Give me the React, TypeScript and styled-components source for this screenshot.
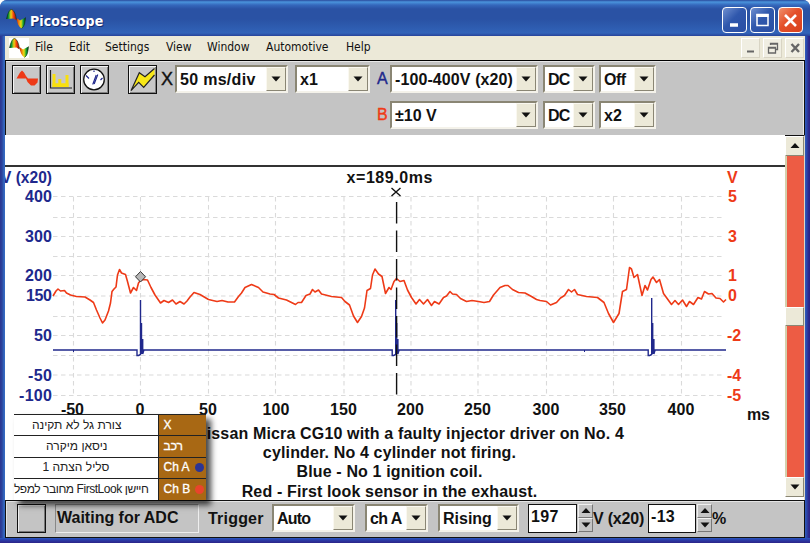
import React from 'react';
import styled, { createGlobalStyle } from 'styled-components';

const GlobalStyle = createGlobalStyle`
  * { box-sizing: border-box; }
  html, body { margin: 0; padding: 0; background: #fff; overflow: hidden; }
`;

const UI_FONT = `"Liberation Sans", Arial, sans-serif`;
const MENU_FONT = `"DejaVu Sans Condensed", "DejaVu Sans", sans-serif`;
const BLUE = '#20288c';
const RED = '#ee3a17';

const Window = styled.div`
  position: relative;
  width: 810px;
  height: 543px;
  display: flex;
  flex-direction: column;
  padding: 0 5px 5px;
  overflow: hidden;
  border-radius: 7px 7px 0 0;
  background:
    linear-gradient(0deg, #2c2488 0, #2a3ca8 3px, #2858c0 5px, transparent 5px),
    linear-gradient(90deg, #2c3490 0, #2c449c 2px, #3468c0 4px, #3468c0 804px, #2c50b4 806px, #2c2488 809px);
  font: 700 16px ${UI_FONT};
  color: #111;
`;

const TitleBar = styled.header`
  height: 36px;
  margin: 0 -5px;
  padding: 5px 7px 0 6px;
  display: flex;
  align-items: flex-start;
  background: linear-gradient(180deg, #2a4a9c 0, #4a94dc 2px, #3568bc 5px, #2a52a4 9px, #2a52a4 19px, #2f5eb2 29px, #3263b8 33px, #27439a 36px);
`;

const Title = styled.h1`
  margin: 6px auto 0 4px;
  font: 700 14px/20px ${MENU_FONT};
  letter-spacing: 0.1px;
  color: #fff;
  text-shadow: 1px 1px 0 #14286c;
`;

const CaptionButtons = styled.div`
  display: flex;
  gap: 3px;
  margin-top: 2px;
`;

const CaptionButton = styled.button<{ $close?: boolean }>`
  width: 25px;
  height: 26px;
  padding: 0;
  display: grid;
  place-items: center;
  border: 1px solid #fff;
  border-radius: 4px;
  background: ${p => p.$close
    ? 'linear-gradient(135deg, #f0906c, #e4502a 45%, #d8401c)'
    : 'linear-gradient(135deg, #7090d0, #2f57ac 45%, #2a4ea4)'};
`;

const MenuBar = styled.nav`
  height: 24px;
  flex: none;
  display: flex;
  align-items: center;
  padding-left: 4px;
  background: #ece9d8;
  font: 400 12px/20px ${MENU_FONT};
  color: #111;
`;

const MenuItems = styled.div`
  display: flex;
  gap: 15px;
  margin-left: 6px;
`;

const MenuItem = styled.span<{ $w: number }>`
  width: ${p => p.$w}px;
  white-space: nowrap;
  padding-bottom: 2px;
`;

const MdiButtons = styled.div`
  display: flex;
  gap: 3px;
  margin-left: auto;
  margin-right: 1px;
`;

const MdiButton = styled.button`
  width: 19px;
  height: 20px;
  padding: 0;
  display: grid;
  place-items: center;
  border: 1px solid;
  border-color: #fff #d8d4c4 #d8d4c4 #fff;
  background: #f0eee2;
`;

const Toolbar = styled.section`
  height: 75px;
  flex: none;
  display: flex;
  align-items: flex-start;
  padding: 4px 0 0 6px;
  border-top: 1px solid #000;
  border-left: 1px solid #111;
  border-right: 1px solid #111;
  background: #c4c4c4;
  box-shadow: inset -1px 1px #e8e8e8;
`;

const ToolButton = styled.button<{ $gap?: number }>`
  width: 29px;
  height: 29px;
  padding: 0;
  flex: none;
  margin-right: ${p => p.$gap ?? 5}px;
  display: block;
  border: 1px solid #111;
  background: #c8c8c8;
  box-shadow: inset 1px 1px #f4f4f4, inset -1px -1px #808080;
`;

const AxisCaption = styled.span<{ $c?: string }>`
  width: 12px;
  line-height: 28px;
  font-weight: 400;
  font-size: 16px;
  -webkit-text-stroke: 0.4px currentColor;
  color: ${p => p.$c ?? '#111'};
`;

const CaptionX = styled(AxisCaption)`
  width: 14px;
  margin-left: 4px;
  font-size: 18px;
`;

const ChannelGrid = styled.div`
  display: grid;
  grid-template-columns: 13px 148px 52px 57px;
  row-gap: 8px;
  margin-left: 7px;
  & > :nth-child(4n + 3) { margin-left: 5px; width: 52px; }
  & > :nth-child(4n) { margin-left: 9px; width: 57px; }
`;

const ComboBox = styled.div<{ $w: number; $gap?: number }>`
  width: ${p => p.$w}px;
  height: 28px;
  flex: none;
  margin-right: ${p => p.$gap ?? 0}px;
  display: flex;
  justify-content: space-between;
  align-items: stretch;
  border: 2px solid;
  border-color: #8a8674 #f4f2ea #f4f2ea #8a8674;
  background: #fff;
  overflow: hidden;
`;

const ComboText = styled.span<{ $ls?: number }>`
  padding-left: 3px;
  line-height: 25px;
  white-space: nowrap;
  letter-spacing: ${p => p.$ls ?? 0}px;
  width: 0;
`;

const ComboArrow = styled.span`
  width: 20px;
  display: grid;
  place-items: center;
  background: #ece9d8;
  border: 1px solid;
  border-color: #faf8f0 #8a8674 #8a8674 #faf8f0;
`;

const Body = styled.main`
  flex: 1;
  min-height: 0;
  display: flex;
  background: #fff;
`;

const Plot = styled.div`
  flex: 1;
  display: flex;
  flex-direction: column;
`;

const NoteStrip = styled.div`
  height: 32px;
  border-bottom: 2px solid #333;
  flex: none;
`;

const Chart = styled.svg`
  display: block;
  flex: none;
  width: 780px;
  height: 255px;
`;

const Notes = styled.div`
  display: flex;
  flex-direction: column;
  align-items: center;
  width: 769px;
  padding-top: 2px;
`;

const NoteLine = styled.p<{ $shift?: number }>`
  margin: 0 0 0 ${p => p.$shift ?? 0}px;
  line-height: 19.2px;
  letter-spacing: 0.15px;
  white-space: nowrap;
`;

const Scroll = styled.div`
  width: 20px;
  display: flex;
  flex-direction: column;
  border-top: 1px solid #111;
  border-right: 1px solid #dcd8c8;
  padding-bottom: 3px;
  background: #fff;
`;

const ScrollButton = styled.div`
  height: 20px;
  display: grid;
  place-items: center;
  background: #ece9d8;
  border: 1px solid;
  border-color: #fff #8a8674 #8a8674 #fff;
`;

const Track = styled.div<{ $h: number }>`
  height: ${p => p.$h}px;
  background: #ed5c44;
  border-left: 2px solid #d4d0ac;
`;

const StatusBar = styled.footer`
  height: 38px;
  flex: none;
  display: flex;
  align-items: flex-start;
  padding: 3px 0 0 11px;
  border: 1px solid #111;
  background: #c4c4c4;
  box-shadow: inset 1px 1px #e4e4e4;
`;

const Indicator = styled.div`
  width: 29px;
  height: 29px;
  border: 1px solid #111;
  box-shadow: inset 1px 1px #eee, inset -1px -1px #777;
`;

const StatusPanel = styled.div`
  width: 144px;
  height: 29px;
  margin-left: 9px;
  padding-left: 1px;
  line-height: 26px;
  white-space: nowrap;
  border: 1px solid;
  border-color: #888 #eee #eee #888;
`;

const StatusText = styled.span<{ $w: number; $ls?: number }>`
  width: ${p => p.$w}px;
  line-height: 28px;
  white-space: nowrap;
  letter-spacing: ${p => p.$ls ?? 0}px;
  margin-top: 1px;
`;

const TriggerLabel = styled(StatusText)`
  padding-left: 9px;
`;

const NumberBox = styled.div<{ $w: number }>`
  width: ${p => p.$w}px;
  height: 29px;
  padding-left: 2px;
  line-height: 23px;
  letter-spacing: 0.3px;
  border: 1px solid #111;
  background: #fff;
`;

const Spinner = styled.div`
  width: 15px;
  margin-left: 1px;
  display: grid;
  grid-template-rows: 14px 14px;
`;

const SpinButton = styled.span`
  display: grid;
  place-items: center;
  border: 1px solid;
  border-color: #f0f0f0 #777 #777 #f0f0f0;
`;

const Legend = styled.table`
  position: absolute;
  left: 14px;
  top: 414px;
  width: 192px;
  height: 86px;
  border-collapse: collapse;
  table-layout: fixed;
  background: #fff;
  box-shadow: 5px 5px 6px rgba(0, 0, 0, 0.72);
  font: 400 12px/19px "Liberation Sans", sans-serif;
`;

const LegendText = styled.td<{ $inset: number; $ls?: number }>`
  width: 144px;
  height: 21px;
  padding: 0 ${p => p.$inset}px 0 0;
  text-align: right;
  white-space: nowrap;
  letter-spacing: ${p => p.$ls ?? 0}px;
  border-top: 1px solid #222;
  color: #222;
`;

const LegendKey = styled.td`
  height: 21px;
  padding: 0 0 0 5px;
  border-top: 1px solid #222;
  border-left: 1px solid #222;
  background: #a86814;
  color: #fff;
  -webkit-text-stroke: 0.3px #fff;
`;

const KeyRow = styled.div`
  display: flex;
  align-items: center;
  justify-content: space-between;
  padding-right: 2px;
  white-space: nowrap;
`;

const Dot = styled.i<{ $c: string }>`
  width: 9px;
  height: 9px;
  flex: none;
  border-radius: 50%;
  background: ${p => p.$c};
`;

const SvgTriangle = styled.svg`
  display: block;
`;

const Triangle = ({ up }: { up?: boolean }) => (
  <SvgTriangle width="10" height="6" viewBox="0 0 10 6">
    <path d={up ? 'M5 0 L9.5 5 H.5Z' : 'M.5 .5 H9.5 L5 5.5Z'} fill="#111" />
  </SvgTriangle>
);

const Combo = ({ w, gap, text, ls }: { w: number; gap?: number; text: string; ls?: number }) => (
  <ComboBox $w={w} $gap={gap}>
    <ComboText $ls={ls}>{text}</ComboText>
    <ComboArrow><Triangle /></ComboArrow>
  </ComboBox>
);

const LogoSvg = styled.svg<{ $drop?: number }>`
  flex: none;
  margin-top: ${p => p.$drop ?? 0}px;
`;

const Logo = ({ id, light }: { id: string; light?: boolean }) => (
  <LogoSvg width="20" height="22" viewBox="0 0 20 22" $drop={light ? 0 : 3}>
    <defs>
      <linearGradient id={id} x1="0" x2="1" y1="0" y2="0">
        <stop offset="0" stopColor="#083c20" />
        <stop offset=".2" stopColor="#109838" />
        <stop offset=".45" stopColor="#f0d010" />
        <stop offset=".7" stopColor="#f04010" />
        <stop offset="1" stopColor="#801008" />
      </linearGradient>
      <linearGradient id={`${id}-r`} x1="0" x2="1" y1="0" y2="0">
        <stop offset="0" stopColor="#c02008" />
        <stop offset=".25" stopColor="#f08010" />
        <stop offset=".5" stopColor="#e8e010" />
        <stop offset=".75" stopColor="#10a038" />
        <stop offset="1" stopColor="#043010" />
      </linearGradient>
    </defs>
    {light && <rect width="20" height="20" y="1" fill="#fff" />}
    <path d="M.5 11 C2 5 3 2 5.5 1.5 C8.5 2.5 9.8 7 10.5 12.5 L7.5 10.5Z" fill={`url(#${id})`} />
    <path d="M10.5 10 L14 12.5 L19.5 9.5 C19 15 18.5 18.5 15.5 20.5 C12.5 18.5 11 15 10.5 10Z" fill={`url(#${id}-r)`} />
    <path d="M.5 11 C2 5 3 2 5.5 1.5 C8.5 2.5 9.7 7 10.5 11.5 M19.5 9.5 C19 15 18.5 18.5 15.5 20.5" fill="none" stroke="#10340c" strokeWidth=".6" />
  </LogoSvg>
);

const pressureTrace = `53,296 56,291 58,289 60.5,291 64.5,290.5 66.5,293 70.5,295 76.5,296.5 85,297 90,300 93.5,302.5 96.5,310 100,318 102.5,323 105,320 108.5,311 110.5,303 112,291.5 114,289 116,287 117.5,275 119.5,269.5 121.5,273 125.5,274.5 127.5,281.5 130.5,293 133.5,287.5 136.5,290.5 138.5,283 140.5,280.5 143.5,279.5 147.5,280 151,287.5 155,295 160.5,303 164,300.5 168.5,302.5 172.5,300 176,304 180,301.5 184,304 187,301 190,297 194,292.5 200,294.5 208.5,299.5 217,301.5 222,300.5 228,302 234.5,302 238.5,296.5 241.5,293 245,287.5 251.5,284.5 258.5,287.5 263,292 270,294 274,294.5 278.5,298 286.5,300 295.5,304.5 298,302.5 301.5,302.5 306,295.5 310,294 312.5,289.5 315,292 318.5,290 321.5,294 331.5,296.5 341.5,297.5 345,301.5 349.5,305 353.5,316 357.5,322.5 361.5,316.5 364.5,308 367,290.5 370.5,288.5 372.5,275 375,269 378.5,274 382,276.5 385.5,293.5 389,287.5 391,289.5 394,281.5 396.5,278.5 400,281.5 404,280.5 407.5,290 411.5,297.5 416,304 419.5,299.5 423.5,304 427.5,299.5 431.5,305.5 434.5,301.5 439,304 443.5,297.5 446.5,296 450,291.5 452.5,294 456.5,294.5 460.5,298.5 466.5,301.5 472,300.5 478.5,301.5 484,302.5 489.5,301.5 493.5,295 500,287.5 505,285.5 508,285.5 512.5,289.5 518.5,292.5 525,293 531.5,296.5 536.5,299.5 540,300.5 546.5,301.5 550.5,305 556.5,302.5 560.5,298 564.5,295.5 568.5,289.5 571.5,292 574.5,289.5 577.5,294.5 586.5,296.5 597.5,297.5 604,302.5 608.5,313.5 613.5,322.5 619,313.5 622.5,291.5 626.5,289.5 629.5,267.5 631.5,269 634,277.5 637.5,274.5 642,295.5 645,285.5 647.5,290 651,279.5 653,277 656.5,282.5 659.5,279.5 663.5,293.5 671.5,304.5 675,300.5 678.5,304.5 682.5,300 686.5,306.5 689.5,301.5 693.5,304.5 698,297.5 701.5,299 704.5,291.5 708.5,294 712,293.5 716,298 720,298.5 723.5,302 726,299.5`;

const pulse = (x: number, top: number) =>
  `H${x - 3.5} V355.5 H${x - 2} L${x} 354.5 V${top} V354 L${x + 1} 323 V354 L${x + 2.2} 339 V354 L${x + 3.4} 350 `;
const ignitionTrace = `M53 350 ${pulse(140.5, 300)}${pulse(395.7, 300)}${pulse(651.7, 298)}H726`;

const gridX = [73.5, 140.5, 208.5, 275.5, 344, 411, 478, 546.5, 613.5, 681.5];
const gridY = [196.5, 217.5, 236.5, 256.5, 275.5, 296, 316.5, 335.5, 355.5, 375, 395.5];
const leftLabels: [string, number, number][] = [
  ['400', 202, 27], ['300', 241.5, 27], ['200', 281, 27], ['150', 301, 26], ['50', 341, 18], ['-50', 380.5, 24], ['-100', 401, 33],
];
const rightLabels: [string, number, number][] = [
  ['5', 202, 728], ['3', 241.5, 728], ['1', 281, 728], ['0', 301, 728], ['-2', 341, 727], ['-4', 380.5, 727], ['-5', 401, 727],
];
const timeLabels: [string, number, number][] = [
  ['-50', 72.5, 23], ['0', 140, 8.5], ['50', 208, 18], ['100', 276, 27], ['150', 343.5, 27], ['200', 410.5, 27],
  ['250', 477.5, 27], ['300', 546, 27], ['350', 612.5, 27], ['400', 681, 27],
];

const ScopeChart = () => (
  <Chart viewBox="5 167 780 255" fontFamily={UI_FONT} fontWeight="700" fontSize="16">
    <g stroke="#dadada" strokeWidth="1.1" strokeDasharray="4.5 3.5" fill="none">
      {gridX.map(x => <path key={x} d={`M${x} 197V396`} />)}
      {gridY.map(y => <path key={y} d={`M53 ${y}H725`} />)}
    </g>
    <g fill={BLUE} textAnchor="end">
      <text x="52" y="183" textLength="51" lengthAdjust="spacingAndGlyphs">V (x20)</text>
      {leftLabels.map(([t, y, w]) => <text key={t} x="52" y={y} textLength={w}>{t}</text>)}
    </g>
    <g fill={RED}>
      <text x="727" y="182.5">V</text>
      {rightLabels.map(([t, y, x]) => <text key={t} x={x} y={y}>{t}</text>)}
    </g>
    <g fill="#111" textAnchor="middle">
      <text x="389.5" y="183" textLength="86">x=189.0ms</text>
      {timeLabels.map(([t, x, w]) => <text key={t} x={x} y="415" textLength={w}>{t}</text>)}
      <text x="758.5" y="420" textLength="23">ms</text>
    </g>
    <path d="M391.5 188 L400.5 196 M400.5 188 L391.5 196" stroke="#111" strokeWidth="1.4" />
    <polyline points={pressureTrace} fill="none" stroke={RED} strokeWidth="1.6" strokeLinejoin="round" />
    <path d={ignitionTrace} fill="none" stroke={BLUE} strokeWidth="1.4" />
    <path d="M73.5 350v2 M584.5 350v2" stroke={BLUE} />
    <path d="M396.6 202V396" stroke="#111" strokeWidth="1.4" strokeDasharray="21.5 7" />
    <path d="M140.5 271.5 L145.5 276.8 L140.5 282 L135.5 276.8Z" fill="#b8b8b8" stroke="#333" />
  </Chart>
);

const menus: [string, number][] = [
  ['File', 19], ['Edit', 21], ['Settings', 46], ['View', 26], ['Window', 44], ['Automotive', 65], ['Help', 25],
];

export default function App() {
  return (
    <>
      <GlobalStyle />
      <Window>
        <TitleBar>
          <Logo id="title-logo" />
          <Title>PicoScope</Title>
          <CaptionButtons>
            <CaptionButton><svg width="19" height="20"><path d="M5 15H13" stroke="#fff" strokeWidth="3.5" /></svg></CaptionButton>
            <CaptionButton><svg width="19" height="20"><path d="M4 4.5V15.5H15V4.5Z" fill="none" stroke="#fff" strokeWidth="1.5" /><path d="M3.5 5.5H15.5" stroke="#fff" strokeWidth="3" /></svg></CaptionButton>
            <CaptionButton $close><svg width="19" height="20"><path d="M4 5 L15 16 M15 5 L4 16" stroke="#fff" strokeWidth="2.6" /></svg></CaptionButton>
          </CaptionButtons>
        </TitleBar>
        <MenuBar>
          <Logo id="menu-logo" light />
          <MenuItems>
            {menus.map(([t, w]) => <MenuItem key={t} $w={w}>{t}</MenuItem>)}
          </MenuItems>
          <MdiButtons>
            <MdiButton><svg width="16" height="18"><path d="M4 12.5H11" stroke="#666" strokeWidth="2" /></svg></MdiButton>
            <MdiButton><svg width="16" height="18"><path d="M3.5 8.5H10.5V14H3.5Z M3 9H11 M5.5 6V4.5H12.5V10.5H11 M5 5H13" fill="none" stroke="#666" strokeWidth="1.3" /></svg></MdiButton>
            <MdiButton><svg width="16" height="18"><path d="M4.5 5 L12 13 M12 5 L4.5 13" stroke="#666" strokeWidth="2.4" /></svg></MdiButton>
          </MdiButtons>
        </MenuBar>
        <Toolbar>
          <ToolButton>
            <svg width="27" height="27"><path d="M3.5 12.5 L7 6.5 L9 4.5 L11 6.5 L13 10 L15 12.5 H25 L24.5 16.5 L21.5 19.5 H18 L14.5 16 L13 12.5Z" fill={RED} /></svg>
          </ToolButton>
          <ToolButton>
            <svg width="27" height="27"><path d="M7 21V8 M12.8 21V13 M20 21V9" stroke="#f8e010" strokeWidth="3" /><path d="M5.5 19.2H21.5" stroke="#f8e010" strokeWidth="3.8" /><path d="M3.5 4V22H25" fill="none" stroke="#222" strokeWidth="1.2" /></svg>
          </ToolButton>
          <ToolButton $gap={19}>
            <svg width="27" height="27"><circle cx="13" cy="13.5" r="10.3" fill="#fff" stroke="#111" strokeWidth="1.3" /><path d="M11.7 18.5 L15.2 9 M13.2 18 L16.8 8.5" stroke={BLUE} strokeWidth="1.1" /><path d="M5 9.5 L8 12.5 M13 4.5V6 M21.5 12L19.5 14" stroke={BLUE} strokeWidth="1.2" /></svg>
          </ToolButton>
          <ToolButton $gap={0}>
            <svg width="27" height="27"><path d="M2 24.7 L10.3 6.7 L16 10.7 L25.5 2.5 V9 L14.7 21.3 L9.7 16.3Z" fill="#f8e818" /><path d="M2 24.7 L10.3 6.7 L16 10.7 L25.5 2.5 M2 24.7 L9.7 16.3 L14.7 21.3 L25.5 9" fill="none" stroke="#222" strokeWidth="1.2" /></svg>
          </ToolButton>
          <CaptionX>X</CaptionX>
          <Combo w={113} gap={7} text="50 ms/div" ls={0.3} />
          <Combo w={75} text="x1" />
          <ChannelGrid>
            <AxisCaption $c={BLUE}>A</AxisCaption>
            <Combo w={148} text="-100-400V (x20)" ls={0.1} />
            <Combo w={52} text="DC" ls={-0.8} />
            <Combo w={57} text="Off" ls={-0.5} />
            <AxisCaption $c={RED}>B</AxisCaption>
            <Combo w={148} text="±10 V" />
            <Combo w={52} text="DC" ls={-0.8} />
            <Combo w={57} text="x2" />
          </ChannelGrid>
        </Toolbar>
        <Body>
          <Plot>
            <NoteStrip />
            <ScopeChart />
            <Notes>
              <NoteLine $shift={40}>Nissan Micra CG10 with a faulty injector driver on No. 4</NoteLine>
              <NoteLine>cylinder. No 4 cylinder not firing.</NoteLine>
              <NoteLine>Blue - No 1 ignition coil.</NoteLine>
              <NoteLine>Red - First look sensor in the exhaust.</NoteLine>
            </Notes>
          </Plot>
          <Scroll>
            <ScrollButton><Triangle up /></ScrollButton>
            <Track $h={151} />
            <ScrollButton />
            <Track $h={151} />
            <ScrollButton><Triangle /></ScrollButton>
          </Scroll>
        </Body>
        <StatusBar>
          <Indicator />
          <StatusPanel>Waiting for ADC</StatusPanel>
          <TriggerLabel $w={73} $ls={0.2}>Trigger</TriggerLabel>
          <Combo w={83} gap={10} text="Auto" ls={-0.8} />
          <Combo w={63} gap={10} text="ch A" ls={-0.6} />
          <Combo w={81} gap={9} text="Rising" />
          <NumberBox $w={49}>197</NumberBox>
          <Spinner>
            <SpinButton><Triangle up /></SpinButton>
            <SpinButton><Triangle /></SpinButton>
          </Spinner>
          <StatusText $w={55} $ls={-0.2}>V (x20)</StatusText>
          <NumberBox $w={48}>-13</NumberBox>
          <Spinner>
            <SpinButton><Triangle up /></SpinButton>
            <SpinButton><Triangle /></SpinButton>
          </Spinner>
          <StatusText $w={16}>%</StatusText>
        </StatusBar>
        <Legend>
          <colgroup><col width="144" /><col width="48" /></colgroup>
          <tbody>
            <tr><LegendText dir="rtl" $inset={36}>צורת גל לא תקינה</LegendText><LegendKey><KeyRow>X</KeyRow></LegendKey></tr>
            <tr><LegendText dir="rtl" $inset={50}>ניסאן מיקרה</LegendText><LegendKey><KeyRow>רכב</KeyRow></LegendKey></tr>
            <tr><LegendText dir="rtl" $inset={48}>סליל הצתה 1</LegendText><LegendKey><KeyRow>Ch A<Dot $c="#2c3494" /></KeyRow></LegendKey></tr>
            <tr><LegendText dir="rtl" $inset={9} $ls={-0.45}>חיישן FirstLook מחובר למפל</LegendText><LegendKey><KeyRow>Ch B<Dot $c="#e8442c" /></KeyRow></LegendKey></tr>
          </tbody>
        </Legend>
      </Window>
    </>
  );
}
